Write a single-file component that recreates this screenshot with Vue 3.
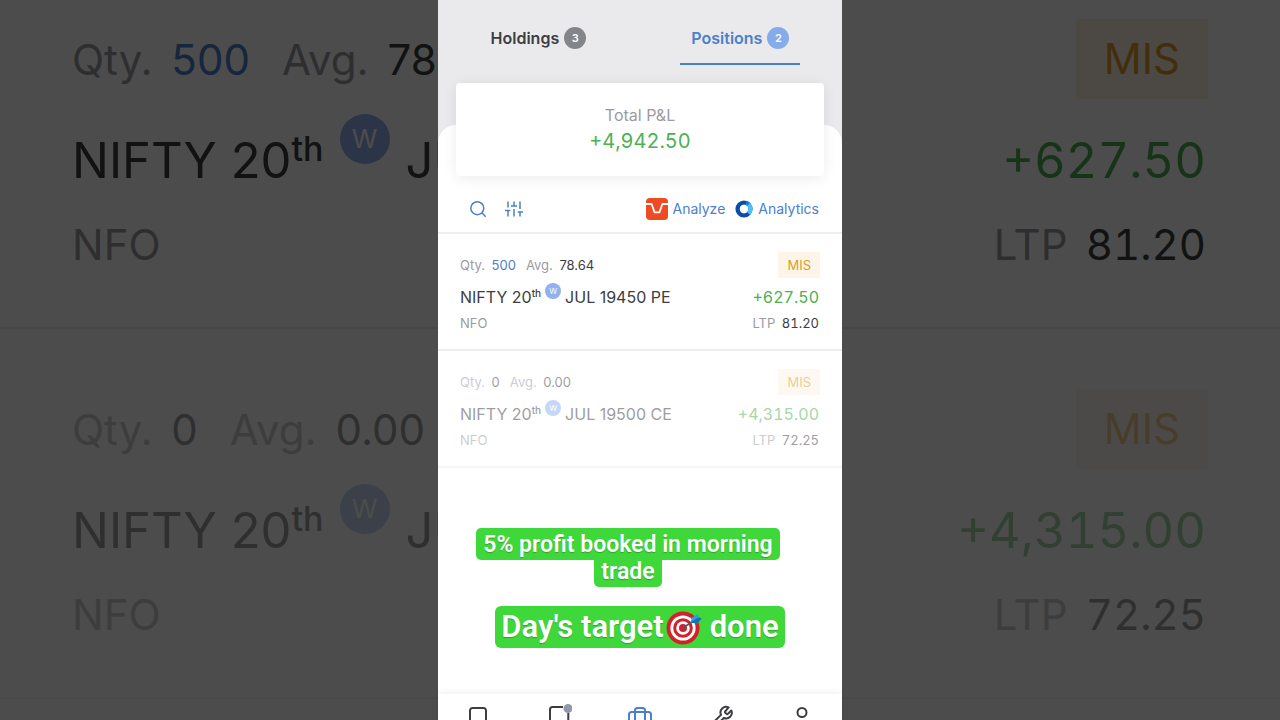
<template>
  <div class="stage">
    <div class="backdrop" aria-hidden="true">
      <div
        v-for="item in positions"
        :key="item.id"
        :class="{ closed: item.qty === '0' }"
        class="position large"
      >
        <div class="line line-top">
          <div class="stats">
            <span class="muted">Qty. <span :class="item.qty === '0' ? 'value' : 'qty-open'">{{ item.qty }}</span></span>
            <span class="muted">Avg. <span class="value">{{ item.avg }}</span></span>
          </div>
          <span class="product">{{ item.product }}</span>
        </div>
        <div class="line line-name">
          <div class="name">
            <span>{{ item.symbol }}<sup>th</sup></span>
            <span class="weekly">W</span>
            <span>{{ item.month }}</span>
          </div>
          <span class="pnl">{{ item.pnl }}</span>
        </div>
        <div class="line line-bottom">
          <span class="muted">{{ item.exchange }}</span>
          <span class="ltp muted">LTP <span class="value">{{ item.ltp }}</span></span>
        </div>
      </div>
    </div>

    <div class="phone">
      <header class="header">
        <nav class="tabs">
          <button
            v-for="tab in tabs"
            :key="tab.id"
            type="button"
            :class="{ active: activeTab === tab.id }"
            class="tab"
            @click="activeTab = tab.id"
          >
            <span>{{ tab.label }}</span>
            <span class="tab-count">{{ tab.count }}</span>
          </button>
        </nav>
      </header>

      <main class="sheet">
        <section class="total-card">
          <div class="total-label">Total P&amp;L</div>
          <div class="total-value">+4,942.50</div>
        </section>

        <div class="toolbar">
          <div class="tools">
            <button type="button" class="tool" aria-label="Search">
              <svg width="18" height="18" viewBox="0 0 18 18">
                <circle cx="8.3" cy="8.2" r="6.5" />
                <path d="M13 13l3.3 3.2" />
              </svg>
            </button>
            <button type="button" class="tool" aria-label="Filter">
              <svg width="18" height="18" viewBox="0 0 24 24" class="sliders">
                <path d="M4 22v-8M4 10V2M12 22V12M12 8V2M20 22v-6M20 12V2M0 14h7M8 8h8M17 16h7" />
              </svg>
            </button>
          </div>
          <div class="links">
            <a href="#" class="link link-analyze">
              <svg width="22" height="22" viewBox="0 0 22 22">
                <rect width="22" height="22" rx="4" fill="#ee4a24" />
                <path d="M0 6h5.600l3 8.400h4.800l3-8.400H22" fill="none" stroke="#fff" stroke-width="1.8" stroke-linejoin="round" />
              </svg>
              <span>Analyze</span>
            </a>
            <a href="#" class="link link-analytics">
              <svg width="18" height="18" viewBox="0 0 18 18">
                <circle cx="9" cy="9" r="6.4" fill="none" stroke="#0b4da8" stroke-width="4.4" />
                <path d="M11 2.900a6.400 6.400 0 0 1 3 2.100" fill="none" stroke="#1684dc" stroke-width="4.4" />
                <path d="M13.600 4.600a6.400 6.400 0 0 1 0 8.800" fill="none" stroke="#4cc3f8" stroke-width="4.4" />
                <circle cx="9" cy="9" r="4.200" fill="#fff" />
              </svg>
              <span>Analytics</span>
            </a>
          </div>
        </div>

        <div
          v-for="item in positions"
          :key="item.id"
          :class="{ closed: item.qty === '0' }"
          class="position"
        >
          <div class="line line-top">
            <div class="stats">
              <span class="muted">Qty. <span :class="item.qty === '0' ? 'value' : 'qty-open'">{{ item.qty }}</span></span>
              <span class="muted">Avg. <span class="value">{{ item.avg }}</span></span>
            </div>
            <span class="product">{{ item.product }}</span>
          </div>
          <div class="line line-name">
            <div class="name">
              <span>{{ item.symbol }}<sup>th</sup></span>
              <span class="weekly">W</span>
              <span>{{ item.month }} {{ item.strike }}</span>
            </div>
            <span class="pnl">{{ item.pnl }}</span>
          </div>
          <div class="line line-bottom">
            <span class="muted">{{ item.exchange }}</span>
            <span class="ltp muted">LTP <span class="value">{{ item.ltp }}</span></span>
          </div>
        </div>

        <div class="captions">
          <p class="caption"><span>5% profit booked in morning trade</span></p>
          <p class="caption-big">
            <span>Day's target</span>
            <svg width="36" height="36" viewBox="0 0 36 36" role="img" aria-label="target">
              <circle cx="17" cy="19" r="16.5" fill="#d5202c" />
              <circle cx="17" cy="19" r="12.6" fill="#fff" />
              <circle cx="17" cy="19" r="9.8" fill="#d5202c" />
              <circle cx="17" cy="19" r="6.8" fill="#fff" />
              <circle cx="17" cy="19" r="4" fill="#d5202c" />
              <path d="M17 19L28 11.500" stroke="#3b6178" stroke-width="1.6" stroke-linecap="round" />
              <path d="M24.500 13.500l1.500-5 6-3.500.3 3.500 3.300.8-4 5.300z" fill="#2b9fe6" />
              <path d="M24.500 13.500l7.800-5 3.300.8-4 5.300z" fill="#176fb4" />
            </svg>
            <span>done</span>
          </p>
        </div>
      </main>

      <nav class="bottom-nav">
        <button type="button" aria-label="Watchlist">
          <svg width="26" height="26" viewBox="0 0 26 26">
            <path d="M5 23V6.500a2.500 2.500 0 0 1 2.500-2.500h11A2.500 2.500 0 0 1 21 6.500V23l-8-5z" />
          </svg>
        </button>
        <button type="button" aria-label="Orders">
          <svg width="26" height="26" viewBox="0 0 26 26">
            <path d="M4 24V5.500A2.500 2.500 0 0 1 6.500 3H17M22.300 9v15" />
            <circle cx="22" cy="4.500" r="4.500" class="dot" />
          </svg>
        </button>
        <button type="button" class="current" aria-label="Portfolio">
          <svg width="26" height="26" viewBox="0 0 26 26">
            <rect x="2" y="8" width="22" height="15" rx="2.500" />
            <path d="M8 23V6.500A2.500 2.500 0 0 1 10.500 4h5A2.500 2.500 0 0 1 18 6.500V23" />
          </svg>
        </button>
        <button type="button" aria-label="Tools">
          <svg width="26" height="26" viewBox="0 0 26 26">
            <path d="M17.300 7.300a1 1 0 0 0 0 1.400l1.200 1.200a1 1 0 0 0 1.400 0l3.400-3.400a5.700 5.700 0 0 1-7.500 7.500l-6.500 6.500a2 2 0 0 1-3-3l6.700-6.600a5.700 5.700 0 0 1 7.600-7.500z" />
          </svg>
        </button>
        <button type="button" aria-label="Account">
          <svg width="26" height="26" viewBox="0 0 26 26">
            <circle cx="13" cy="8.500" r="4.500" />
            <path d="M4 25c0-5 4-7 9-7s9 2 9 7" />
          </svg>
        </button>
      </nav>
    </div>
  </div>
</template>

<script setup>
import { ref } from 'vue'

const activeTab = ref('positions')

const tabs = [
  { id: 'holdings', label: 'Holdings', count: 3 },
  { id: 'positions', label: 'Positions', count: 2 }
]

const positions = [
  {
    id: 1,
    qty: '500',
    avg: '78.64',
    product: 'MIS',
    symbol: 'NIFTY 20',
    month: 'JUL',
    strike: '19450 PE',
    pnl: '+627.50',
    exchange: 'NFO',
    ltp: '81.20'
  },
  {
    id: 2,
    qty: '0',
    avg: '0.00',
    product: 'MIS',
    symbol: 'NIFTY 20',
    month: 'JUL',
    strike: '19500 CE',
    pnl: '+4,315.00',
    exchange: 'NFO',
    ltp: '72.25'
  }
]
</script>

<style>
body {
  margin: 0;
  background: #4c4c4c;
}
</style>

<style scoped>
.stage {
  position: relative;
  height: 100vh;
  display: flex;
  justify-content: center;
  overflow: hidden;
  font-family: Inter, "Liberation Sans", sans-serif;
  color: #3d3d42;
}

button {
  border: 0;
  padding: 0;
  background: none;
  font: inherit;
  color: inherit;
  cursor: pointer;
}

/* enlarged, dimmed rows behind the phone */
.backdrop {
  position: absolute;
  inset: -41px 0 0;
  background: #fff;
}

.backdrop::after {
  content: "";
  position: absolute;
  inset: 0;
  background: rgba(0, 0, 0, 0.7);
}

.phone {
  position: relative;
  width: 404px;
  max-width: 100%;
  display: flex;
  flex-direction: column;
  background: #eaeaec;
}

.header {
  padding: 12px 0 60px;
}

.tabs {
  display: flex;
  justify-content: space-around;
}

.tab {
  height: 53px;
  display: flex;
  align-items: center;
  gap: 5px;
  padding: 0 11px;
  border-bottom: 2px solid transparent;
  font-size: 16px;
  font-weight: 600;
}

.tab.active {
  color: #4a80cc;
  border-color: #4a80cc;
}

.tab-count {
  width: 22px;
  height: 22px;
  border-radius: 50%;
  background: #84858b;
  color: #fff;
  font-size: 11px;
  line-height: 22px;
  text-align: center;
}

.tab.active .tab-count {
  background: #85abea;
}

.sheet {
  flex: 1;
  min-height: 0;
  background: #fff;
  border-radius: 18px 18px 0 0;
}

.total-card {
  box-sizing: border-box;
  height: 93px;
  margin: -42px 18px 0;
  padding-top: 20px;
  background: #fff;
  border-radius: 4px;
  box-shadow: 0 2px 14px rgba(0, 0, 0, 0.08);
  text-align: center;
}

.total-label {
  font-size: 16px;
  line-height: 24px;
  color: #9b9ba3;
}

.total-value {
  font-size: 20px;
  line-height: 28px;
  color: #4db051;
  font-variant-numeric: tabular-nums;
}

.toolbar {
  height: 47px;
  display: flex;
  justify-content: space-between;
  align-items: center;
  padding: 9px 23px 0 31px;
  border-bottom: 2px solid #eeeeee;
}

.tools,
.links {
  display: flex;
  align-items: center;
}

.tools {
  gap: 18px;
}

.tool {
  display: flex;
}

.tool svg {
  fill: none;
  stroke: #4a80cc;
  stroke-width: 1.5;
  stroke-linecap: round;
}

.tool .sliders {
  stroke-width: 2;
  stroke-linecap: butt;
}

.links {
  gap: 10px;
}

.link {
  display: flex;
  align-items: center;
  gap: 5px;
  font-size: 14px;
  color: #4a80cc;
  text-decoration: none;
}

.position {
  padding: 18px 22px 14px;
  border-bottom: 2px solid #eeeeee;
}

.position.closed {
  border-color: #f5f5f5;
}

.closed .line {
  opacity: 0.5;
}

.line {
  display: flex;
  justify-content: space-between;
  align-items: center;
}

.line-top {
  height: 26px;
  margin-bottom: 5px;
  font-size: 13px;
}

.line-name {
  height: 28px;
  padding-right: 1px;
  font-size: 16px;
}

.line-bottom {
  height: 24px;
  padding-right: 1px;
  font-size: 13px;
}

.stats {
  display: flex;
  gap: 10px;
}

.muted {
  color: #9b9ba3;
}

.value,
.qty-open {
  margin-left: 3px;
}

.value {
  color: #3d3d42;
}

.qty-open {
  color: #4a80cc;
}

.product {
  padding: 0 9px;
  line-height: 26px;
  background: #fdf5e7;
  color: #df9b26;
}

.name {
  display: flex;
  align-items: center;
  gap: 4px;
}

.name sup {
  font-size: 10px;
  font-weight: 500;
  line-height: 0;
}

.weekly {
  width: 16px;
  height: 16px;
  margin-bottom: 13px;
  border-radius: 50%;
  background: #8fb1ed;
  color: #fff;
  font-size: 8px;
  line-height: 16px;
  text-align: center;
}

.pnl {
  color: #4db051;
  font-variant-numeric: tabular-nums;
}

.ltp {
  font-variant-numeric: tabular-nums;
}

.large {
  padding: 60px 72px 43px;
}

.large .line-top {
  height: 80px;
  margin-bottom: 17px;
  font-size: 42px;
}

.large .line-name {
  height: 88px;
  padding-right: 2px;
  font-size: 49px;
}

.large .line-bottom {
  height: 80px;
  padding-right: 2px;
  font-size: 42px;
}

.large .stats {
  gap: 32px;
}

.large .value,
.large .qty-open {
  margin-left: 7px;
}

.large .product {
  padding: 0 28px;
  line-height: 80px;
}

.large .name {
  gap: 16px;
}

.large .name sup {
  font-size: 34px;
}

.large .weekly {
  width: 50px;
  height: 50px;
  margin-bottom: 42px;
  font-size: 26px;
  line-height: 50px;
}

.captions {
  padding: 63px 36px 0;
  font-family: Roboto, "Liberation Sans", sans-serif;
  font-weight: 600;
  color: #fff;
  text-align: center;
  text-shadow: 0 1px 1px rgba(0, 0, 0, 0.25);
}

.caption {
  margin: 0 24px 21px 0;
  font-size: 23px;
  line-height: 27px;
}

.caption span {
  padding: 3px 7px 2px;
  border-radius: 5px;
  background: #3fd83b;
  -webkit-box-decoration-break: clone;
  box-decoration-break: clone;
}

.caption-big {
  width: fit-content;
  height: 42px;
  display: flex;
  align-items: center;
  margin: 0 auto;
  padding: 0 6px;
  border-radius: 6px;
  background: #3fd83b;
  font-size: 31px;
  line-height: 42px;
}

.caption-big svg {
  margin: 0 8px 0 2px;
}

.bottom-nav {
  position: relative;
  height: 26px;
  display: grid;
  grid-template-columns: repeat(5, 1fr);
  background: #fff;
  box-shadow: 0 -2px 6px rgba(0, 0, 0, 0.06);
}

.bottom-nav button {
  display: flex;
  justify-content: center;
  padding-top: 10px;
}

.bottom-nav svg {
  fill: none;
  stroke: #3d3d42;
  stroke-width: 2;
  stroke-linejoin: round;
}

.bottom-nav .current svg {
  stroke: #4a80cc;
}

.bottom-nav .dot {
  fill: #9297ab;
  stroke: none;
}
</style>
